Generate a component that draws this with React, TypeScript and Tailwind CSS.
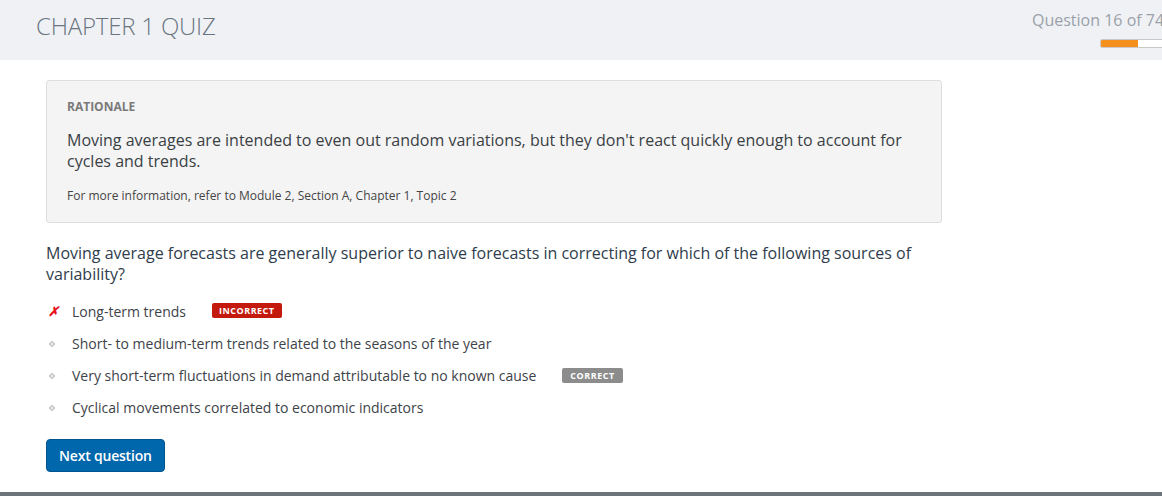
import React from "react"

const options = [
  { text: "Long-term trends", state: "incorrect" },
  { text: "Short- to medium-term trends related to the seasons of the year", state: "none" },
  { text: "Very short-term fluctuations in demand attributable to no known cause", state: "correct" },
  { text: "Cyclical movements correlated to economic indicators", state: "none" },
]

function Diamond() {
  return (
    <svg width="8" height="8" viewBox="0 0 8 8" className="mt-[1px]">
      <path d="M4 0.5 L7.5 4 L4 7.5 L0.5 4 Z" fill="#c8c8c8" />
      <path d="M4 2.5 L5.5 4 L4 5.5 L2.5 4 Z" fill="#ececec" />
    </svg>
  )
}

export default function App() {
  return (
    <div className="w-[1162px] h-[496px] overflow-hidden bg-white flex flex-col" style={{ fontFamily: '"Open Sans", sans-serif' }}>
      <header className="h-[60px] shrink-0 bg-[#eff1f5] flex overflow-hidden">
        <h1 className="pl-[36px] pt-[10px] text-[24px] font-light text-[#6b7580] tracking-[-0.2px] leading-[32px]">
          CHAPTER 1 QUIZ
        </h1>
        <div className="ml-auto w-[130px] shrink-0 pt-[9px]">
          <div className="whitespace-nowrap text-[16px] leading-[22px] text-[#9aa1a9]">Question 16 of 74</div>
          <div className="ml-[68px] mt-[8px] w-[80px] h-[9px] border border-[#c9c9c9] rounded-[2px] bg-white flex overflow-hidden">
            <div className="w-[37px] h-full bg-[#f5901e]" />
          </div>
        </div>
      </header>

      <main className="flex-1 pl-[46px] pt-[20px]">
        <div className="w-[896px]">
          <section className="bg-[#f4f4f4] border border-[#dedede] rounded-[3px] px-[20px] pt-[18px] pb-[18px]">
            <h2 className="text-[12px] font-bold text-[#7a7a7a] leading-[16px]">RATIONALE</h2>
            <p className="mt-[15px] text-[16px] leading-[21px] text-[#3a3f44]">
              Moving averages are intended to even out random variations, but they don't react quickly enough to account for cycles and trends.
            </p>
            <p className="mt-[16px] text-[12px] leading-[16px] text-[#444]">
              For more information, refer to Module 2, Section A, Chapter 1, Topic 2
            </p>
          </section>

          <p className="mt-[20px] text-[16px] leading-[21px] text-[#2f3d4c] pr-[20px]">
            Moving average forecasts are generally superior to naive forecasts in correcting for which of the following sources of variability?
          </p>

          <ul className="mt-[16px] flex flex-col gap-[11px]">
            {options.map((o) => (
              <li key={o.text} className="flex items-center h-[21px] text-[14px] text-[#3d4348]">
                <span className="w-[26px] flex justify-start pl-[2px]">
                  {o.state === "incorrect" ? (
                    <span className="text-[#e8141b] text-[13px] font-bold italic leading-none">✗</span>
                  ) : (
                    <Diamond />
                  )}
                </span>
                <span>{o.text}</span>
                {o.state === "incorrect" && (
                  <span className="ml-[26px] -mt-[2px] bg-[#c41a0e] text-white text-[9px] font-bold tracking-[0.5px] leading-[15px] px-[7px] rounded-[2px]">
                    INCORRECT
                  </span>
                )}
                {o.state === "correct" && (
                  <span className="ml-[26px] bg-[#8c8c8c] text-white text-[9px] font-bold tracking-[0.5px] leading-[15px] px-[8px] rounded-[2px]">
                    CORRECT
                  </span>
                )}
              </li>
            ))}
          </ul>

          <button className="mt-[21px] h-[33px] px-[12px] bg-[#0067ad] border border-[#00548f] rounded-[4px] text-white text-[14px] font-semibold tracking-[-0.2px]">
            Next question
          </button>
        </div>
      </main>

      <div className="h-[4px] shrink-0 bg-[#6b747b]" />
    </div>
  )
}
